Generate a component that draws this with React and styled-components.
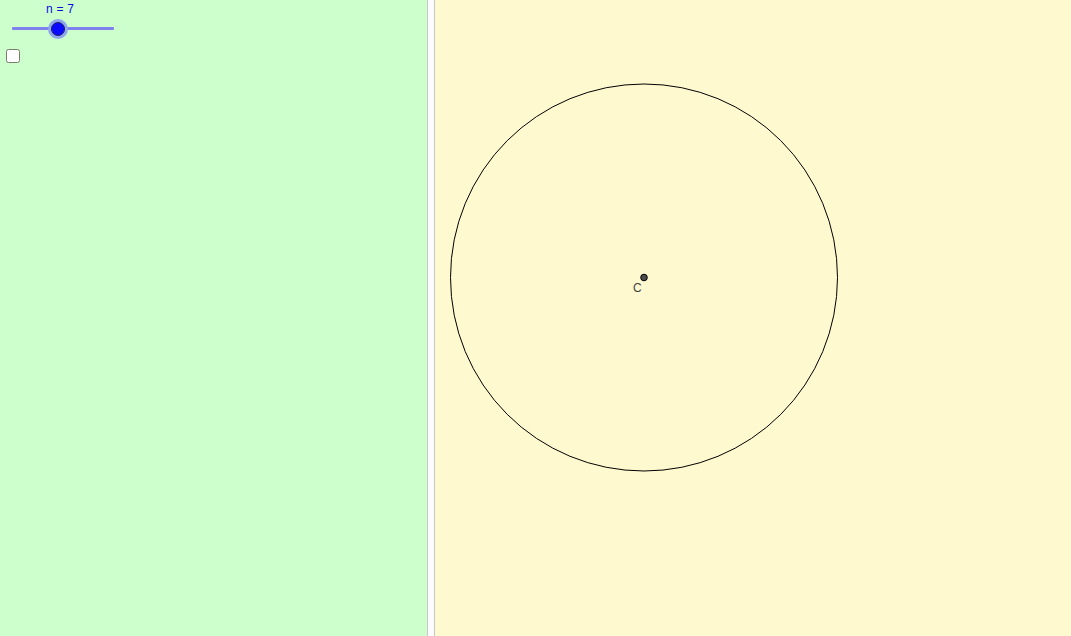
import React from 'react';
import styled, { createGlobalStyle } from 'styled-components';

const GlobalStyle = createGlobalStyle`
  html, body {
    margin: 0;
    padding: 0;
    background: #ffffff;
    font-family: "Liberation Sans", Arial, sans-serif;
  }
  #root {
    height: 636px;
  }
`;

const Page = styled.div`
  display: flex;
  width: 1071px;
  height: 636px;
  overflow: hidden;
`;

const AlgebraPane = styled.div`
  width: 427px;
  flex: none;
  background: #ccffcc;
  border-right: 1px solid #c8c8c8;
  padding: 3px 0 0 0;
  box-sizing: content-box;
  display: flex;
  flex-direction: column;
`;

const Splitter = styled.div`
  width: 6px;
  flex: none;
  background: #fcfcfe;
`;

const GraphicsPane = styled.div`
  flex: 1;
  background: #fff9d0;
  border-left: 1px solid #c8c8c8;
  position: relative;
`;

const SliderBox = styled.div`
  width: 102px;
  margin-left: 12px;
  display: flex;
  flex-direction: column;
  align-items: center;
`;

const SliderLabel = styled.div`
  font-size: 12px;
  line-height: 12px;
  color: #0a0ae0;
  margin-left: -6px;
  letter-spacing: 0.2px;
`;

const Track = styled.div`
  position: relative;
  width: 102px;
  height: 3px;
  margin-top: 12px;
  background: #8080ee;
  border-radius: 1px;
`;

const Knob = styled.div`
  position: absolute;
  left: ${p => p.$pos}px;
  top: 50%;
  width: 12px;
  height: 12px;
  transform: translate(-50%, -50%);
  border-radius: 50%;
  background: #0a0aff;
  border: 1px solid #202060;
  box-shadow: 0 0 0 3px #8fa6ee;
`;

const CheckRow = styled.div`
  margin: 19px 0 0 6px;
`;

const Checkbox = styled.div`
  width: 12px;
  height: 12px;
  border: 1.5px solid #7a7a6a;
  border-radius: 2.5px;
  background: #ffffff;
`;

const Canvas = styled.svg`
  display: block;
  width: 100%;
  height: 100%;
`;

export default function App() {
  // graphics pane starts at x = 435
  const cx = 644 - 435;
  const cy = 277.5;
  return (
    <>
      <GlobalStyle />
      <Page>
        <AlgebraPane>
          <SliderBox>
            <SliderLabel>n = 7</SliderLabel>
            <Track>
              <Knob $pos={46} />
            </Track>
          </SliderBox>
          <CheckRow>
            <Checkbox />
          </CheckRow>
        </AlgebraPane>
        <Splitter />
        <GraphicsPane>
          <Canvas viewBox="0 0 636 636">
            <circle cx={cx} cy={cy} r={193.5} fill="none" stroke="#000" strokeWidth="1" />
            <circle cx={cx} cy={cy} r={3.3} fill="#4d4d4d" stroke="#000" strokeWidth="1" />
            <text x={cx - 11} y={cy + 14} fontSize="12" fill="#444" fontFamily="Liberation Sans, Arial, sans-serif">C</text>
          </Canvas>
        </GraphicsPane>
      </Page>
    </>
  );
}
